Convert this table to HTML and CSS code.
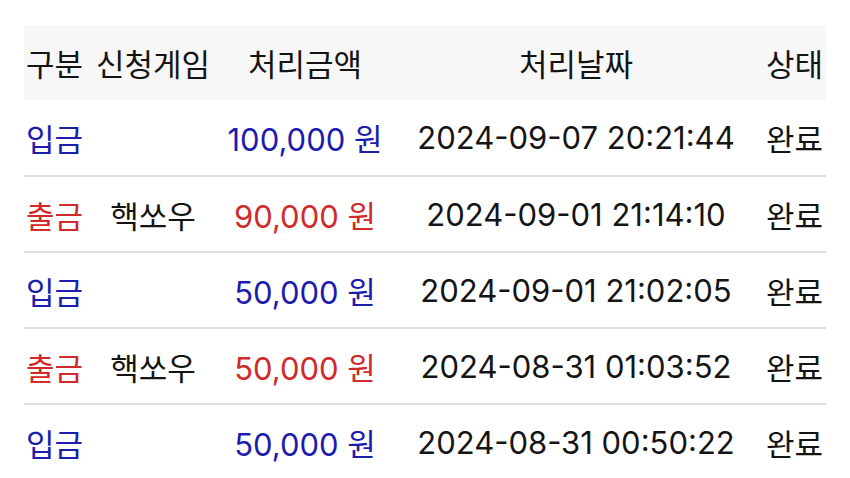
FILE: index.html
```html
<!DOCTYPE html>
<html lang="ko">
<head>
  <meta charset="UTF-8" />
  <meta name="viewport" content="width=device-width, initial-scale=1" />
  <title>처리내역</title>
  <link rel="stylesheet" href="styles.css">
</head>
<body>
  <table class="history">
    <colgroup>
      <col class="col-type">
      <col class="col-game">
      <col class="col-amount">
      <col class="col-date">
      <col class="col-state">
    </colgroup>
    <thead>
      <tr>
        <th>구분</th>
        <th>신청게임</th>
        <th>처리금액</th>
        <th>처리날짜</th>
        <th>상태</th>
      </tr>
    </thead>
    <tbody>
      <tr class="deposit">
        <td class="kind">입금</td>
        <td></td>
        <td class="money">100,000 원</td>
        <td>2024-09-07 20:21:44</td>
        <td>완료</td>
      </tr>
      <tr class="withdraw">
        <td class="kind">출금</td>
        <td>핵쏘우</td>
        <td class="money">90,000 원</td>
        <td>2024-09-01 21:14:10</td>
        <td>완료</td>
      </tr>
      <tr class="deposit">
        <td class="kind">입금</td>
        <td></td>
        <td class="money">50,000 원</td>
        <td>2024-09-01 21:02:05</td>
        <td>완료</td>
      </tr>
      <tr class="withdraw">
        <td class="kind">출금</td>
        <td>핵쏘우</td>
        <td class="money">50,000 원</td>
        <td>2024-08-31 01:03:52</td>
        <td>완료</td>
      </tr>
      <tr class="deposit">
        <td class="kind">입금</td>
        <td></td>
        <td class="money">50,000 원</td>
        <td>2024-08-31 00:50:22</td>
        <td>완료</td>
      </tr>
    </tbody>
  </table>
</body>
</html>
```

FILE: styles.css
```css
* {
  margin: 0;
  padding: 0;
  box-sizing: border-box;
}

body {
  background: #ffffff;
  color: #141414;
  font-family: Inter, "Noto Sans CJK KR", sans-serif;
  padding: 25px 24px 0;
}

.history {
  width: 802px;
  border-collapse: collapse;
  table-layout: fixed;
  font-size: 31px;
}

.col-type { width: 61px; }
.col-game { width: 136px; }
.col-amount { width: 168px; }
.col-date { width: 374px; }
.col-state { width: 63px; }

.history th,
.history td {
  text-align: center;
  font-weight: 400;
  white-space: nowrap;
  padding: 0;
}

.history thead tr {
  background: #f7f7f7;
  height: 75px;
}

.history tbody tr {
  height: 76px;
  border-top: 2px solid #dedede;
}

.history tbody tr:first-child {
  border-top: none;
}

.deposit .kind,
.deposit .money {
  color: #1c1cae;
}

.withdraw .kind,
.withdraw .money {
  color: #d02a2a;
}
```
